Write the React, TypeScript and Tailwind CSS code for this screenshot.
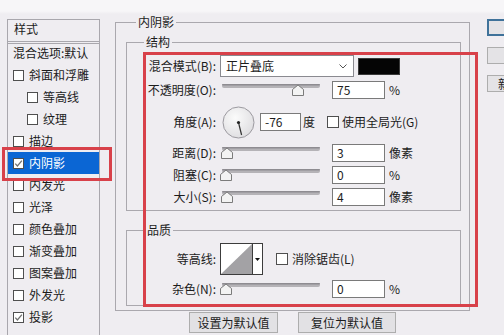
import React from 'react';

function Check({ checked = false, small = false }: { checked?: boolean; small?: boolean }) {
  return (
    <span
      className={`flex shrink-0 items-center justify-center border border-[#4f4f4f] bg-white ${
        small ? 'w-[11px] h-[11px]' : 'w-[12px] h-[12px]'
      }`}
    >
      {checked && (
        <svg width="9" height="9" viewBox="0 0 9 9">
          <path d="M1.3 4.6 L3.4 6.9 L7.9 1.6" fill="none" stroke="#707070" strokeWidth="1.3" />
        </svg>
      )}
    </span>
  );
}

function Slider({ at }: { at: number }) {
  return (
    <svg width="104" height="14" className="shrink-0">
      <rect x="3" y="1" width="98" height="4" rx="2" fill="#b5b3b7" />
      <rect x="3" y="1" width="98" height="1.5" rx="0.75" fill="#8e8c91" />
      <path
        d={`M${at - 5.5} 12.5 V6.5 L${at} 2 L${at + 5.5} 6.5 V12.5 Z`}
        fill="#f3f3f3"
        stroke="#7b7b7b"
      />
    </svg>
  );
}

function Field({ value, w = 'w-[53px]' }: { value: string; w?: string }) {
  return (
    <div className={`${w} h-[18px] shrink-0 border border-[#7a7a7a] bg-white pl-[4px] flex items-center`}>
      {value}
    </div>
  );
}

function Row({ label, className, children }: { label: string; className: string; children: React.ReactNode }) {
  return (
    <div className={`flex items-center ${className}`}>
      <span className="w-[89px] shrink-0 text-right">{label}</span>
      {children}
    </div>
  );
}

function Group({ title, left, className, children }: { title: string; left: string; className: string; children?: React.ReactNode }) {
  return (
    <div className={`relative border border-[#aaa8ae] ${className}`}>
      <span className={`absolute -top-[9px] ${left} px-[2px] bg-[#efedf1] leading-[16px]`}>{title}</span>
      {children}
    </div>
  );
}

const styles: { name: string; checked?: boolean; indent?: boolean; active?: boolean }[] = [
  { name: '斜面和浮雕' },
  { name: '等高线', indent: true },
  { name: '纹理', indent: true },
  { name: '描边' },
  { name: '内阴影', checked: true, active: true },
  { name: '内发光' },
  { name: '光泽' },
  { name: '颜色叠加' },
  { name: '渐变叠加' },
  { name: '图案叠加' },
  { name: '外发光' },
  { name: '投影', checked: true },
];

export default function App() {
  return (
    <div className="relative w-[504px] h-[335px] overflow-hidden bg-[linear-gradient(#f7f6f8_0,#f7f6f8_11px,#efedf1_14px)] font-['Noto_Sans_CJK_SC',sans-serif] text-[12px] leading-[16px] text-[#1c1c1c]">
      <div className="flex items-start">
        {/* left style list */}
        <div className="ml-[7px] mt-[19px] w-[93px] h-[330px] shrink-0 border border-[#a9a7ad]">
          <div className="h-[21px] pl-[6px] pt-[1px]">样式</div>
          <div className="h-[3px] border-y border-[#a9a7ad]" />
          <div className="h-[20px] pl-[5px] pt-[1px]">混合选项:默认</div>
          {styles.map((s) => (
            <div
              key={s.name}
              className={`relative h-[22px] flex items-center ${s.indent ? 'pl-[19px]' : 'pl-[5px]'} ${
                s.active ? 'bg-[#0b66d4] text-white' : ''
              }`}
            >
              <Check small checked={s.checked} />
              <span className="ml-[5px]">{s.name}</span>
              {s.active && (
                <span className="absolute -left-[6px] -top-[5px] w-[110px] h-[34px] border-[3px] border-[#d8414a] z-10" />
              )}
            </div>
          ))}
        </div>

        {/* main panel */}
        <div className="ml-[15px] mt-[22px] w-[355px] shrink-0">
          <Group title="内阴影" left="left-[20px]" className="h-[289px] pl-[10px] pt-[19px]">
            <Group title="结构" left="left-[17px]" className="w-[335px] h-[169px]">
              <Row label="混合模式(B):" className="h-[22px] mt-[12px]">
                <div className="ml-[4px] w-[134px] h-[22px] shrink-0 border border-[#8a8a90] bg-white flex items-center justify-between pl-[5px] pr-[6px]">
                  <span>正片叠底</span>
                  <svg width="8" height="5" viewBox="0 0 8 5">
                    <path d="M0.5 0.5 L4 4 L7.5 0.5" fill="none" stroke="#555" />
                  </svg>
                </div>
                <div className="ml-[4px] w-[42px] h-[17px] bg-[#050505] border border-[#3a3a3a]" />
              </Row>
              <Row label="不透明度(O):" className="h-[18px] mt-[4px]">
                <span className="ml-[3px]">
                  <Slider at={79} />
                </span>
                <span className="ml-[9px]">
                  <Field value="75" />
                </span>
                <span className="ml-[4px]">%</span>
              </Row>
              <Row label="角度(A):" className="h-[32px] mt-[7px]">
                <svg width="33" height="33" className="ml-[6px] shrink-0">
                  <defs>
                    <radialGradient id="dial" cx="40%" cy="35%" r="70%">
                      <stop offset="0" stopColor="#fbfbfb" />
                      <stop offset="1" stopColor="#dedde0" />
                    </radialGradient>
                  </defs>
                  <circle cx="16.5" cy="16.5" r="15.5" fill="url(#dial)" stroke="#9c9aa0" />
                  <line x1="16.5" y1="16.5" x2="19.6" y2="29" stroke="#333" strokeWidth="1.2" />
                  <circle cx="16.5" cy="16.5" r="1.6" fill="#222" />
                </svg>
                <span className="ml-[5px]">
                  <Field value="-76" w="w-[41px]" />
                </span>
                <span className="ml-[2px]">度</span>
                <span className="ml-[12px]">
                  <Check />
                </span>
                <span className="ml-[3px]">使用全局光(G)</span>
              </Row>
              <Row label="距离(D):" className="h-[18px] mt-[6px]">
                <span className="ml-[3px]">
                  <Slider at={8} />
                </span>
                <span className="ml-[9px]">
                  <Field value="3" />
                </span>
                <span className="ml-[4px]">像素</span>
              </Row>
              <Row label="阻塞(C):" className="h-[18px] mt-[4px]">
                <span className="ml-[3px]">
                  <Slider at={7} />
                </span>
                <span className="ml-[9px]">
                  <Field value="0" />
                </span>
                <span className="ml-[4px]">%</span>
              </Row>
              <Row label="大小(S):" className="h-[18px] mt-[4px]">
                <span className="ml-[3px]">
                  <Slider at={8} />
                </span>
                <span className="ml-[9px]">
                  <Field value="4" />
                </span>
                <span className="ml-[4px]">像素</span>
              </Row>
            </Group>

            <Group title="品质" left="left-[18px]" className="w-[335px] h-[76px] mt-[19px]">
              <Row label="等高线:" className="h-[32px] mt-[12px]">
                <div className="ml-[4px] w-[43px] h-[32px] shrink-0 border border-[#3c3c3c] bg-white flex">
                  <svg width="31" height="30" className="shrink-0">
                    <polygon points="31,0 31,30 0,30" fill="#a3a2a5" />
                  </svg>
                  <div className="w-[10px] border-l border-[#3c3c3c] flex items-center justify-center">
                    <svg width="5" height="3" viewBox="0 0 5 3">
                      <polygon points="0,0 5,0 2.5,3" fill="#111" />
                    </svg>
                  </div>
                </div>
                <span className="ml-[13px]">
                  <Check />
                </span>
                <span className="ml-[4px]">消除锯齿(L)</span>
              </Row>
              <Row label="杂色(N):" className="h-[18px] mt-[5px]">
                <span className="ml-[3px]">
                  <Slider at={7} />
                </span>
                <span className="ml-[9px]">
                  <Field value="0" />
                </span>
                <span className="ml-[4px]">%</span>
              </Row>
            </Group>
          </Group>

          <div className="flex mt-[1px]">
            <button className="ml-[74px] w-[89px] h-[21px] border border-[#adadad] bg-[#e2e1e4]">设置为默认值</button>
            <button className="ml-[20px] w-[98px] h-[21px] border border-[#adadad] bg-[#e2e1e4]">复位为默认值</button>
          </div>
        </div>

        {/* right buttons */}
        <div className="ml-[17px] mt-[19px] w-[40px] shrink-0 flex flex-col">
          <div className="h-[17px] border-2 border-[#3f729a] bg-[#e4e3e6]" />
          <div className="h-[17px] mt-[11px] border border-[#adadad] bg-[#e4e3e6]" />
          <div className="h-[17px] mt-[11px] border border-[#adadad] bg-[#e4e3e6] pl-[10px] leading-[15px]">新建</div>
        </div>
      </div>

      {/* highlight frame */}
      <div className="absolute left-[143px] top-[52px] w-[335px] h-[255px] border-[3px] border-[#d8414a] pointer-events-none" />
    </div>
  );
}
